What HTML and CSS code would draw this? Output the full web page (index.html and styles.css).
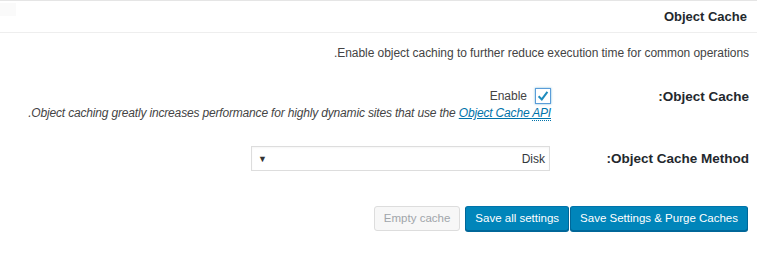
FILE: index.html
```html
<!DOCTYPE html>
<html lang="en" dir="rtl">
<head>
<meta charset="utf-8">
<title>Object Cache</title>
<link rel="stylesheet" href="styles.css">
</head>
<body>
<div class="postbox">
  <div class="postbox-header">
    <h3 class="hndle">Object Cache</h3>
    <span class="toggle"></span>
  </div>
  <div class="inside">
    <p class="desc">Enable object caching to further reduce execution time for common operations.</p>
    <div class="row row-enable">
      <div class="th">Object Cache:</div>
      <div class="td">
        <label class="check-label">
          <span class="checkbox"><svg viewBox="0 0 14 14" width="14" height="14"><path d="M2.6 7.2 L5.8 10.4 L11.4 2.8" fill="none" stroke="#1e8cbe" stroke-width="2"/></svg></span>
          <span>Enable</span>
        </label>
        <p class="note">Object caching greatly increases performance for highly dynamic sites that use the <a href="#">Object Cache <abbr title="Application Programming Interface">API</abbr></a>.</p>
      </div>
    </div>
    <div class="row row-method">
      <div class="th">Object Cache Method:</div>
      <div class="td">
        <div class="select"><span class="select-value">Disk</span><span class="select-arrow">▼</span></div>
      </div>
    </div>
    <div class="actions">
      <button class="button button-primary">Save Settings &amp; Purge Caches</button>
      <button class="button button-primary">Save all settings</button>
      <button class="button button-disabled" disabled>Empty cache</button>
    </div>
  </div>
</div>
</body>
</html>
```
FILE: styles.css
```css
html, body {
  margin: 0;
  padding: 0;
  background: #fff;
}
body {
  font-family: "Liberation Sans", Arial, sans-serif;
  font-size: 12px;
  color: #444;
}
.postbox {
  width: 757px;
  height: 258px;
  border-top: 1px solid #e5e5e5;
  border-bottom: 1px solid #e5e5e5;
  display: flex;
  flex-direction: column;
}
.postbox-header {
  height: 31px;
  border-bottom: 1px solid #eee;
  display: flex;
  align-items: center;
  justify-content: space-between;
  padding-right: 10px;
}
.hndle {
  margin: 0;
  font-size: 13px;
  font-weight: bold;
  color: #23282d;
}
.toggle {
  width: 16px;
  height: 13px;
  background: #fafafa;
  align-self: flex-start;
  margin-top: 2px;
}
.inside {
  padding: 0 8px 0 0;
  display: flex;
  flex-direction: column;
}
.desc {
  margin: 12px 0 0;
  line-height: 16px;
  letter-spacing: -0.05px;
}
.row {
  display: flex;
}
.th {
  width: 198px;
  flex: none;
  font-weight: bold;
  color: #23282d;
  font-size: 13.5px;
}
.td {
  display: flex;
  flex-direction: column;
  align-items: flex-start;
}
.row-enable {
  margin-top: 27px;
}
.row-enable .th {
  line-height: 16px;
  padding-top: 1px;
}
.check-label {
  display: flex;
  align-items: center;
  gap: 8px;
  height: 16px;
  line-height: 16px;
}
.checkbox {
  width: 14px;
  height: 14px;
  border: 1px solid #5b9dd9;
  box-shadow: 0 0 2px rgba(30, 140, 190, .6);
  display: flex;
  align-items: center;
  justify-content: center;
  background: #fff;
}
.checkbox svg {
  width: 14px;
  height: 14px;
}
.note {
  margin: 1px 0 0;
  font-style: italic;
  line-height: 16px;
  white-space: nowrap;
  letter-spacing: -0.17px;
}
.note a {
  color: #0073aa;
  text-decoration: underline;
}
.note abbr {
  text-decoration: none;
  border-bottom: 1px dotted #0073aa;
}
.row-method {
  margin-top: 25px;
  align-items: center;
}
.select {
  width: 287px;
  height: 23px;
  border: 1px solid #ddd;
  margin-right: 1px;
  display: flex;
  align-items: center;
  justify-content: space-between;
  padding: 0 4px 0 6px;
  box-sizing: content-box;
  box-shadow: inset 0 1px 2px rgba(0,0,0,.04);
  color: #32373c;
}
.select-arrow {
  font-size: 9px;
  color: #333;
}
.actions {
  margin-top: 35px;
  display: flex;
  flex-direction: row;
  padding-right: 1px;
}
.button {
  font-family: inherit;
  font-size: 11.5px;
  height: 25px;
  line-height: 23px;
  padding: 0 9px;
  border-radius: 3px;
  border: 1px solid;
  margin: 0;
}
.button-primary {
  background: #0085ba;
  border-color: #0073aa #006799 #006799;
  color: #fff;
  box-shadow: 0 1px 0 #006799;
}
.button-primary + .button-primary {
  margin-right: 1px;
}
.button-disabled {
  background: #f7f7f7;
  border-color: #ddd;
  color: #a0a5aa;
  margin-right: 5px;
}
```
